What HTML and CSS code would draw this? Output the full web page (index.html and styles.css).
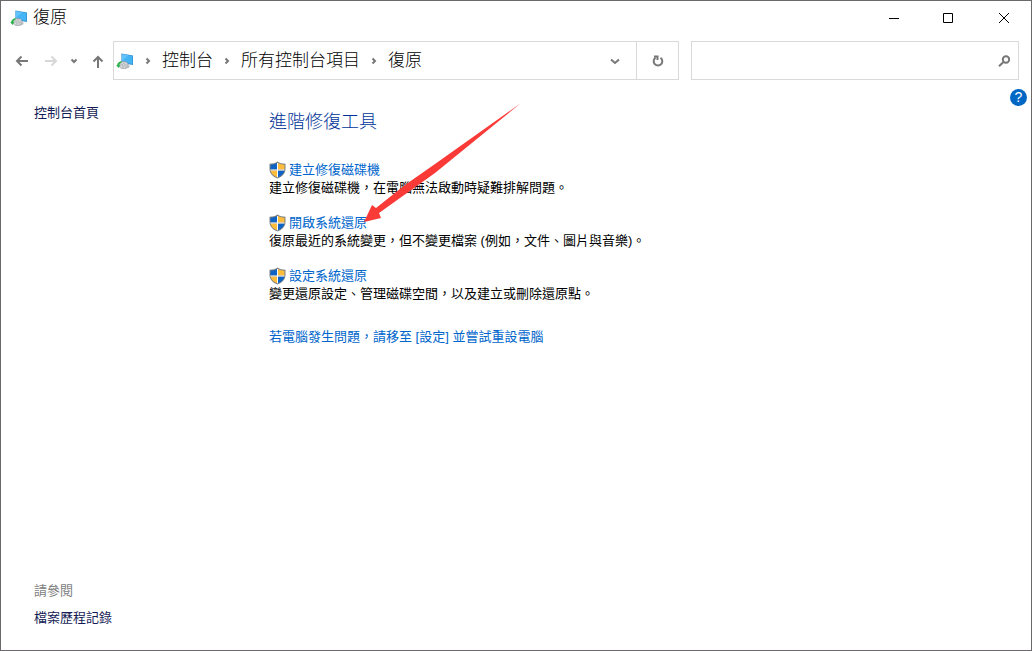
FILE: index.html
```html
<!DOCTYPE html>
<html lang="zh-Hant">
<head>
<meta charset="utf-8">
<title>復原</title>
<link rel="stylesheet" href="styles.css">
</head>
<body>
<svg class="defs" aria-hidden="true">
  <symbol id="recovery" viewBox="0 0 18 18">
    <path d="M5.400 1.500 17 3.500V13L5.400 11z" fill="#2f8fd0"/>
    <path d="M6 2.200 16.300 4V12L6 10.200z" fill="#45b4f5"/>
    <path d="M6 2.200 12 3.300 6 9z" fill="#62c4fb"/>
    <path d="M8 14.500 14 13.500 13 16 9 16.800z" fill="#c3c7ca"/>
    <ellipse cx="7.500" cy="13" rx="4.800" ry="3.600" fill="#c4c8ca" stroke="#969c9f" stroke-width=".7"/>
    <path d="M4.500 15 10.500 11M6 10.500 9 15.500" stroke="#e4e7e8"/>
    <ellipse cx="7.500" cy="13" rx="1.400" ry="1" fill="#eef0f0" stroke="#8e9598" stroke-width=".6"/>
    <path d="M5.500 9C2.500 9.500 1.200 11.500 1.200 13H.200L2.500 16 4.300 13H3.200C3.400 11.800 4.300 11 5.500 10.700z" fill="#2bb34b"/>
  </symbol>
  <symbol id="shield" viewBox="0 0 17 18">
    <path d="M8.500 .500C6.500 2 4 2.700 .500 2.700V8C.500 12.500 4 15.800 8.500 17.500 13 15.800 16.500 12.500 16.500 8V2.700C13 2.700 10.500 2 8.500 .500z" fill="#7b8083"/>
    <path d="M8 2C6 3.200 4 3.600 1.500 3.700V8.500H8z" fill="#0f63c4"/>
    <path d="M9 2C11 3.200 13 3.600 15.500 3.700V8.500H9z" fill="#fdbd3a"/>
    <path d="M1.500 9.500H8V16.200C4.500 14.700 2 12.500 1.500 9.500z" fill="#fdbd3a"/>
    <path d="M15.500 9.500H9V16.200C12.500 14.700 15 12.500 15.500 9.500z" fill="#0f63c4"/>
    <path d="M8.500 2V16.300M1.500 9H15.500" stroke="#fff"/>
  </symbol>
</svg>
<div class="window">
  <header class="titlebar">
    <svg class="app-icon"><use href="#recovery"/></svg>
    <h1 class="title">復原</h1>
    <div class="controls">
      <button class="control" type="button" aria-label="最小化"><svg class="glyph" viewBox="0 0 12 12"><path d="M1 6.500H11"/></svg></button>
      <button class="control" type="button" aria-label="最大化"><svg class="glyph" viewBox="0 0 12 12"><path d="M.500 1.500H9.500V10.500H.500z"/></svg></button>
      <button class="control" type="button" aria-label="關閉"><svg class="glyph" viewBox="0 0 12 12"><path d="M1 1 11 11M11 1 1 11"/></svg></button>
    </div>
  </header>
  <div class="toolbar">
    <nav class="history">
      <button class="tool" type="button" aria-label="上一頁"><svg class="arrow" viewBox="0 0 14 14"><path d="M13 7H2M6.500 2.500 2 7 6.500 11.500"/></svg></button>
      <button class="tool disabled" type="button" aria-label="下一頁" disabled><svg class="arrow" viewBox="0 0 14 14"><path d="M1 7H12M7.500 2.500 12 7 7.500 11.500"/></svg></button>
      <button class="tool narrow" type="button" aria-label="最近的位置"><svg class="chevron" viewBox="0 0 8 8"><path d="M1.500 2.500 4 5 6.500 2.500"/></svg></button>
      <button class="tool" type="button" aria-label="上移"><svg class="arrow" viewBox="0 0 14 14"><path d="M7 14V3M2.500 7.500 7 3 11.500 7.500"/></svg></button>
    </nav>
    <div class="address">
      <svg class="app-icon address-icon"><use href="#recovery"/></svg>
      <svg class="chevron crumb-sep" viewBox="0 0 8 8"><path d="M2.500 1.500 5 4 2.500 6.500"/></svg>
      <a class="crumb" href="#">控制台</a>
      <svg class="chevron crumb-sep" viewBox="0 0 8 8"><path d="M2.500 1.500 5 4 2.500 6.500"/></svg>
      <a class="crumb" href="#">所有控制台項目</a>
      <svg class="chevron crumb-sep" viewBox="0 0 8 8"><path d="M2.500 1.500 5 4 2.500 6.500"/></svg>
      <a class="crumb" href="#">復原</a>
      <button class="box-button dropdown" type="button" aria-label="先前的位置"><svg class="glyph" viewBox="0 0 12 12"><path d="M2 4.500 6 8 10 4.500"/></svg></button>
      <button class="box-button refresh" type="button" aria-label="重新整理"><svg class="glyph" viewBox="0 0 12 12"><path d="M8.500 2.800A4.300 4.300 0 1 1 3.500 2.800M2 1.500H5.500V5"/></svg></button>
    </div>
    <div class="search">
      <input class="search-input" type="search" aria-label="搜尋控制台">
      <svg class="search-icon" viewBox="0 0 12 12" aria-hidden="true"><circle cx="8" cy="4.500" r="3.200"/><path d="M5.500 7 1 11.300"/></svg>
    </div>
  </div>
  <div class="body">
    <aside class="sidebar">
      <a class="side-link" href="#">控制台首頁</a>
      <div class="see-also">
        <span class="see-title">請參閱</span>
        <a class="side-link" href="#">檔案歷程記錄</a>
      </div>
    </aside>
    <main class="main">
      <h2 class="heading">進階修復工具</h2>
      <ul class="tasks">
        <li class="task">
          <a class="link task-link" href="#"><svg class="shield"><use href="#shield"/></svg>建立修復磁碟機</a>
          <p class="desc">建立修復磁碟機，在電腦無法啟動時疑難排解問題。</p>
        </li>
        <li class="task">
          <a class="link task-link" href="#"><svg class="shield"><use href="#shield"/></svg>開啟系統還原</a>
          <p class="desc">復原最近的系統變更，但不變更檔案 (例如，文件、圖片與音樂)。</p>
        </li>
        <li class="task">
          <a class="link task-link" href="#"><svg class="shield"><use href="#shield"/></svg>設定系統還原</a>
          <p class="desc">變更還原設定、管理磁碟空間，以及建立或刪除還原點。</p>
        </li>
      </ul>
      <a class="link" href="#">若電腦發生問題，請移至 [設定] 並嘗試重設電腦</a>
      <svg class="pointer" viewBox="0 0 158 120" aria-hidden="true"><path d="M157 0 71 61 41 82 12 105 8 102 0 119 17 115 15 110 43 90 71 70z"/></svg>
    </main>
    <button class="help" type="button" aria-label="說明">?</button>
  </div>
</div>
</body>
</html>
```

FILE: styles.css
```css
* {
  box-sizing: border-box;
}

body {
  margin: 0;
  background: #fff;
  color: #000;
  font: 13px/18px "Liberation Sans", "Noto Sans CJK TC", sans-serif;
}

a {
  color: inherit;
  text-decoration: none;
}

button {
  padding: 0;
  border: 0;
  background: none;
  color: #777;
  font: inherit;
}

svg {
  display: block;
  flex: none;
}

.defs {
  position: absolute;
  width: 0;
  height: 0;
}

.window {
  display: flex;
  flex-direction: column;
  min-height: 100vh;
  border: 1px solid #6b696b;
}

.titlebar {
  display: flex;
  align-items: center;
  height: 34px;
  padding-left: 9px;
}

.app-icon {
  width: 18px;
  height: 18px;
}

.title {
  margin: 0 auto 0 5px;
  font-size: 17px;
  font-weight: 300;
  line-height: 24px;
}

.controls {
  display: flex;
}

.control {
  display: grid;
  place-items: center;
  width: 55px;
  height: 34px;
  color: #000;
}

.glyph {
  width: 12px;
  height: 12px;
  fill: none;
  stroke: currentColor;
}

.toolbar {
  display: flex;
  padding: 6px 12px 0 6px;
}

.history {
  display: flex;
  align-items: center;
  width: 106px;
}

.tool {
  display: grid;
  place-items: center;
  width: 29px;
  height: 28px;
}

.narrow {
  width: 18px;
}

.disabled {
  color: #d8d8d8;
}

.arrow {
  width: 14px;
  height: 14px;
  fill: none;
  stroke: currentColor;
  stroke-width: 2;
}

.chevron {
  width: 8px;
  height: 8px;
  fill: none;
  stroke: #777;
  stroke-width: 2;
}

.address,
.search {
  display: flex;
  align-items: center;
  height: 39px;
  border: 1px solid #d9d9d9;
}

.address {
  flex: 567;
}

.address-icon {
  margin-left: 2px;
}

.crumb-sep {
  margin: 0 10px;
}

.crumb {
  font-size: 17px;
  font-weight: 300;
  line-height: 24px;
}

.box-button {
  display: grid;
  place-items: center;
  width: 42px;
  height: 37px;
}

.box-button .glyph {
  stroke-width: 2;
}

.dropdown {
  margin-left: auto;
}

.refresh {
  border-left: 1px solid #d9d9d9;
}

.search {
  flex: 327;
  margin-left: 12px;
}

.search-input {
  flex: 1;
  min-width: 0;
  height: 37px;
  border: 0;
  outline: 0;
  background: none;
  font: inherit;
}

.search-icon {
  width: 12px;
  height: 12px;
  margin-right: 8px;
  fill: none;
  stroke: #777;
  stroke-width: 2;
}

.body {
  display: flex;
  flex: 1;
}

.sidebar {
  display: flex;
  flex-direction: column;
  justify-content: space-between;
  width: 268px;
  padding: 24px 0 23px 33px;
}

.side-link {
  color: #151c55;
}

.see-also {
  display: grid;
  gap: 9px;
}

.see-title {
  color: #808080;
}

.main {
  position: relative;
  flex: 1;
  padding-top: 30px;
}

.heading {
  margin: 0 0 27px;
  color: #003399;
  font-size: 18px;
  font-weight: 300;
  line-height: 24px;
}

.tasks {
  display: grid;
  gap: 17px;
  margin: 0 0 25px;
  padding: 0;
  list-style: none;
}

.link {
  color: #0066cc;
}

.task-link {
  display: flex;
  align-items: center;
  gap: 3px;
}

.shield {
  width: 17px;
  height: 18px;
}

.desc {
  margin: 0;
}

.pointer {
  position: absolute;
  top: 23px;
  left: 95px;
  width: 158px;
  height: 120px;
  fill: #f93a37;
}

.help {
  width: 17px;
  height: 17px;
  margin: 9px 4px 0 0;
  border-radius: 50%;
  background: #0067c5;
  color: #fff;
  font-size: 14px;
  line-height: 17px;
}
```
